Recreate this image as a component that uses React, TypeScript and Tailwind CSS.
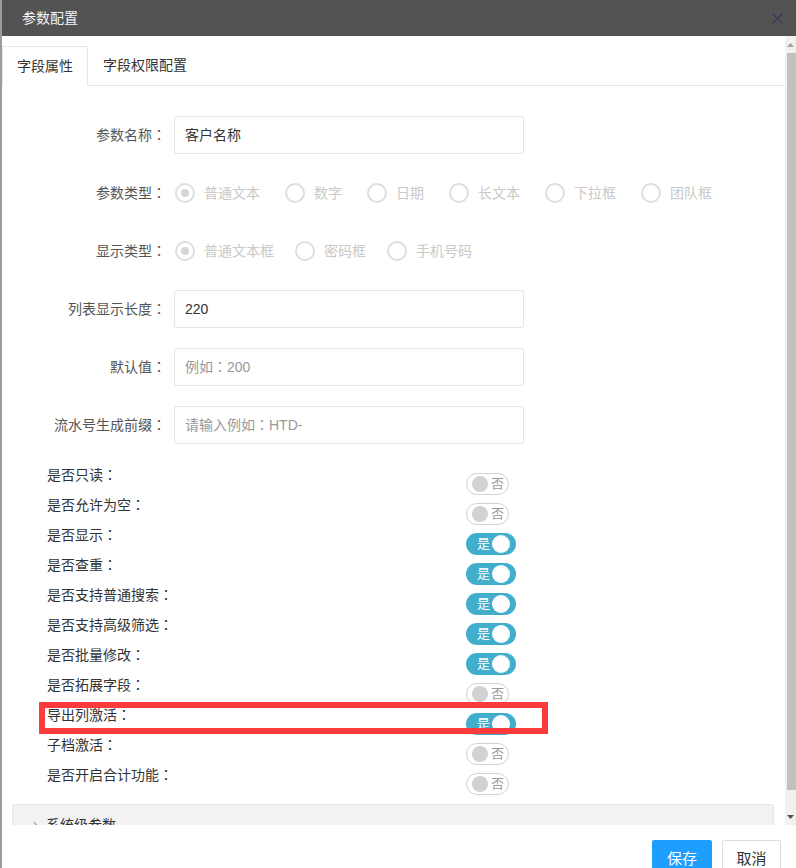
import { ChevronRight } from "lucide-react";

const fieldTypes = ["普通文本", "数字", "日期", "长文本", "下拉框", "团队框"];
const displayTypes = ["普通文本框", "密码框", "手机号码"];

const switches: [string, boolean][] = [
  ["是否只读", false],
  ["是否允许为空", false],
  ["是否显示", true],
  ["是否查重", true],
  ["是否支持普通搜索", true],
  ["是否支持高级筛选", true],
  ["是否批量修改", true],
  ["是否拓展字段", false],
  ["导出列激活", true],
  ["子档激活", false],
  ["是否开启合计功能", false],
];

// full-width colon centred like the reference font
function Colon() {
  return <span className="font-['Noto_Sans_CJK_JP',sans-serif]">：</span>;
}

function Radio({ label, checked }: { label: string; checked?: boolean }) {
  return (
    <div className="flex items-center gap-[9px]">
      <span className="flex size-[20px] items-center justify-center rounded-full border-2 border-[#dedede]">
        {checked && <span className="size-[8px] rounded-full bg-[#d6d6d6]" />}
      </span>
      <span className="text-[14px] text-[#c9c9c9]">{label}</span>
    </div>
  );
}

function Switch({ on }: { on: boolean }) {
  if (on) {
    return (
      <div className="relative mt-[9px] h-[22px] w-[50px] shrink-0 rounded-full bg-[#41aecb]">
        <span className="absolute left-[11px] top-0 text-[13px] leading-[22px] text-white">是</span>
        <span className="absolute right-[6px] top-[2px] size-[18px] rounded-full bg-white" />
      </div>
    );
  }
  return (
    <div className="relative mt-[9px] h-[22px] w-[43px] shrink-0 rounded-full border border-[#d2d2d2] bg-white">
      <span className="absolute left-[5px] top-[2px] size-[16px] rounded-full bg-[#d2d2d2]" />
      <span className="absolute left-[24px] top-0 text-[13px] leading-[20px] text-[#999]">否</span>
    </div>
  );
}

function Label({ text }: { text: string }) {
  return (
    <div className="w-[164px] text-right text-[14px] text-[#555]">
      {text}
      <Colon />
    </div>
  );
}

function InputRow({ label, value, placeholder }: { label: string; value?: string; placeholder?: [string, string] }) {
  return (
    <div className="mb-[20px] flex h-[38px] items-center">
      <Label text={label} />
      <div className="ml-[8px] flex h-[38px] w-[350px] items-center rounded-[2px] border border-[#e6e6e6] pl-[10px] text-[14px]">
        {value ? (
          <span className="text-[#333]">{value}</span>
        ) : (
          placeholder && (
            <span className="text-[#999]">
              {placeholder[0]}
              <Colon />
              {placeholder[1]}
            </span>
          )
        )}
      </div>
    </div>
  );
}

export default function App() {
  return (
    <div className="relative h-[868px] w-[796px] overflow-hidden bg-white font-['Liberation_Sans','Noto_Sans_CJK_SC',sans-serif]">
      <div className="flex h-full">
        <div className="w-[2px] shrink-0 bg-[#9c9c9c]" />
        <div className="flex flex-1 flex-col">
          {/* Header */}
          <div className="flex h-[36px] shrink-0 items-center justify-between bg-[#535353] pl-[20px] pr-[13px]">
            <span className="text-[14px] text-[#f4f4f4]">参数配置</span>
            <svg width="11" height="11" viewBox="0 0 11 11">
              <path d="M0.5 0.5L10.5 10.5M10.5 0.5L0.5 10.5" stroke="#3a3a58" strokeWidth="1.4" />
            </svg>
          </div>

          {/* Scroll area */}
          <div className="flex h-[789px] shrink-0">
            <div className="flex-1 overflow-hidden pt-[10px]">
              {/* Tabs */}
              <div className="flex border-b border-[#e6e6e6]">
                <div className="-mb-px h-[40px] border-x border-t border-[#e6e6e6] bg-white px-[14px] text-[14px] leading-[39px] text-[#333]">
                  字段属性
                </div>
                <div className="-mb-px h-[40px] px-[15px] text-[14px] leading-[39px] text-[#333]">字段权限配置</div>
              </div>

              <div className="mt-[30px]">
                <InputRow label="参数名称" value="客户名称" />

                <div className="mb-[20px] flex h-[38px] items-center">
                  <Label text="参数类型" />
                  <div className="ml-[9px] flex items-center gap-[25px]">
                    {fieldTypes.map((t, i) => (
                      <Radio key={t} label={t} checked={i === 0} />
                    ))}
                  </div>
                </div>

                <div className="mb-[20px] flex h-[38px] items-center">
                  <Label text="显示类型" />
                  <div className="ml-[9px] flex items-center gap-[21px]">
                    {displayTypes.map((t, i) => (
                      <Radio key={t} label={t} checked={i === 0} />
                    ))}
                  </div>
                </div>

                <InputRow label="列表显示长度" value="220" />
                <InputRow label="默认值" placeholder={["例如", "200"]} />
                <InputRow label="流水号生成前缀" placeholder={["请输入例如", "HTD-"]} />

                {/* Switch rows */}
                <div>
                  {switches.map(([label, on]) => (
                    <div key={label} className="flex h-[30px] pl-[45px]">
                      <div className="w-[419px] shrink-0 text-[14px] leading-[20px] text-[#333]">
                        {label}
                        <Colon />
                      </div>
                      <Switch on={on} />
                    </div>
                  ))}
                </div>

                {/* Collapse panel */}
                <div className="ml-[10px] mt-[10px] flex h-[42px] w-[762px] items-center rounded-[2px] border border-[#e6e6e6] bg-[#f2f2f2] pl-[16px]">
                  <ChevronRight size={13} className="text-[#555]" strokeWidth={1.5} />
                  <span className="ml-[4px] text-[14px] text-[#333]">系统级参数</span>
                </div>
              </div>
            </div>

            {/* Scrollbar */}
            <div className="flex w-[11px] shrink-0 flex-col bg-[#f1f1f1]">
              <div className="flex h-[17px] items-center justify-center">
                <svg width="7" height="4" viewBox="0 0 7 4">
                  <path d="M3.5 0L7 4H0Z" fill="#a3a3a3" />
                </svg>
              </div>
              <div className="ml-[2px] h-[737px] w-[9px] bg-[#c1c1c1]" />
              <div className="h-[18px]" />
              <div className="flex h-[17px] items-center justify-center">
                <svg width="7" height="4" viewBox="0 0 7 4">
                  <path d="M0 0H7L3.5 4Z" fill="#505050" />
                </svg>
              </div>
            </div>
          </div>

          {/* Footer */}
          <div className="flex flex-1 justify-end gap-[10px] pr-[15px] pt-[15px]">
            <button className="h-[38px] w-[60px] rounded-[2px] bg-[#1e9fff] text-[15px] text-white">保存</button>
            <button className="h-[38px] w-[59px] rounded-[2px] border border-[#dedede] bg-white text-[15px] text-[#333]">取消</button>
          </div>
        </div>
      </div>

      {/* Highlight annotation */}
      <div className="pointer-events-none absolute left-[39px] top-[702px] h-[32px] w-[509px] border-[6px] border-[#fb3b3b]" />
    </div>
  );
}
